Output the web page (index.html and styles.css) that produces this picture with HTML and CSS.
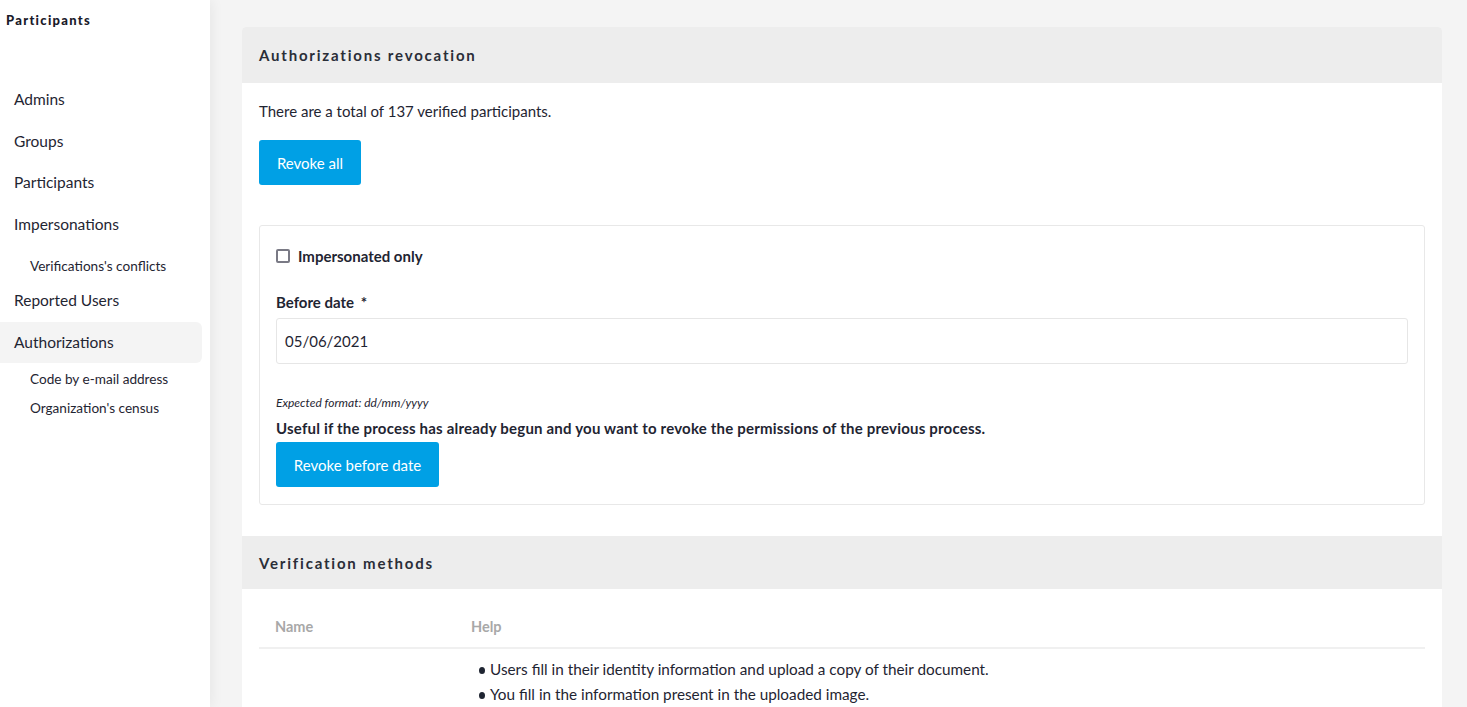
FILE: index.html
```html
<!DOCTYPE html>
<html>
<head>
<meta charset="utf-8">
<link rel="stylesheet" href="styles.css">
</head>
<body>
<div class="layout">
  <aside class="sidebar">
    <div class="side-title">Participants</div>
    <nav class="side-nav">
      <a class="nav-item">Admins</a>
      <a class="nav-item">Groups</a>
      <a class="nav-item">Participants</a>
      <a class="nav-item">Impersonations</a>
      <a class="nav-sub nav-sub-single">Verifications's conflicts</a>
      <a class="nav-item">Reported Users</a>
      <a class="nav-item active">Authorizations</a>
      <a class="nav-sub nav-sub-first">Code by e-mail address</a>
      <a class="nav-sub">Organization's census</a>
    </nav>
  </aside>
  <main class="main">
    <section class="card">
      <div class="card-header">Authorizations revocation</div>
      <div class="card-body">
        <p class="lead">There are a total of 137 verified participants.</p>
        <button class="btn">Revoke all</button>
        <div class="inner-box">
          <label class="check-row"><span class="checkbox"></span>Impersonated only</label>
          <div class="field-label">Before date <span class="req">*</span></div>
          <div class="input">05/06/2021</div>
          <div class="help">Expected format: dd/mm/yyyy</div>
          <div class="note">Useful if the process has already begun and you want to revoke the permissions of the previous process.</div>
          <button class="btn">Revoke before date</button>
        </div>
      </div>
      <div class="card-header second">Verification methods</div>
      <div class="card-body table-body">
        <div class="table-head">
          <div class="col-name">Name</div>
          <div class="col-help">Help</div>
        </div>
        <div class="table-row">
          <div class="col-name"></div>
          <ul class="col-help help-list">
            <li>Users fill in their identity information and upload a copy of their document.</li>
            <li>You fill in the information present in the uploaded image.</li>
          </ul>
        </div>
      </div>
    </section>
  </main>
</div>
</body>
</html>
```
FILE: styles.css
```css
* { box-sizing: border-box; }
html, body { margin: 0; padding: 0; height: 100%; overflow: hidden; }
body {
  font-family: "Lato", "Liberation Sans", sans-serif;
  color: #1f2532;
  background: #f4f4f4;
  font-size: 16px;
}
.layout { display: flex; height: 707px; }
.sidebar {
  width: 210px;
  flex: 0 0 210px;
  background: #fff;
  box-shadow: 2px 0 12px rgba(0,0,0,0.06);
  position: relative;
  z-index: 1;
  padding-right: 8px;
}
.side-title {
  font-size: 13px;
  font-weight: 900;
  letter-spacing: 1.3px;
  padding: 12px 0 0 6px;
  height: 79px;
  color: #1a1a2a;
}
.side-nav { display: flex; flex-direction: column; }
.nav-item {
  display: block;
  font-size: 15.5px;
  padding: 0 14px;
  height: 41.5px;
  line-height: 41px;
  color: #1f2532;
  border-radius: 0 6px 6px 0;
}
.nav-item.active { background: #f4f4f4; }
.nav-sub {
  display: block;
  font-size: 13.6px;
  padding-left: 30px;
  height: 29px;
  line-height: 29px;
  color: #1f2532;
}
.nav-sub-single { height: 35px; padding-top: 8px; line-height: 27px; }
.nav-sub-first { margin-top: 2px; }

.main { flex: 1; padding: 27px 25px 0 32px; }
.card { background: #fff; border-radius: 4px 4px 0 0; overflow: hidden; }
.card-header {
  background: #ededed;
  height: 56px;
  line-height: 56px;
  padding-left: 17px;
  font-size: 15px;
  font-weight: 700;
  letter-spacing: 1.8px;
  color: #2a2e38;
}
.card-header.second { height: 53px; line-height: 54px; }
.card-body { padding: 16px 17px 31px 17px; }
.lead { margin: 0; font-size: 15px; line-height: 24px; }
.btn {
  display: block;
  font-family: inherit;
  background: #00a0e5;
  color: #fff;
  border: 0;
  border-radius: 3px;
  font-size: 15px;
  height: 45px;
  padding: 0 17px;
  cursor: pointer;
}
.card-body > .btn { margin-top: 17px; width: 102px; }
.inner-box {
  margin-top: 40px;
  border: 1px solid #e8e8e8;
  border-radius: 3px;
  padding: 21px 16px 17px 16px;
}
.check-row {
  display: flex;
  align-items: center;
  font-weight: 700;
  font-size: 15px;
  height: 18px;
}
.checkbox {
  width: 14px;
  height: 14px;
  border: 2px solid #7a7a85;
  border-radius: 2px;
  margin-right: 8px;
  background: #fff;
}
.field-label { margin-top: 28px; font-weight: 700; font-size: 15px; line-height: 18px; }
.req { margin-left: 3px; }
.input {
  margin-top: 7px;
  height: 46px;
  border: 1px solid #e6e6e6;
  border-radius: 3px;
  padding-left: 8px;
  line-height: 44px;
  font-size: 15px;
}
.help { margin-top: 32px; font-size: 12px; font-style: italic; line-height: 14px; }
.note { margin-top: 9px; font-weight: 700; font-size: 15px; line-height: 18px; letter-spacing: 0.2px; }
.inner-box .btn { margin-top: 5px; width: 163px; padding: 0; }

.table-body { padding-top: 28px; }
.table-head {
  display: flex;
  height: 32px;
  border-bottom: 2px solid #f0f0f0;
  color: #a8a8a8;
  font-weight: 700;
  font-size: 14.5px;
  line-height: 20px;
}
.col-name { width: 212px; padding-left: 16px; flex: 0 0 212px; }
.col-help { flex: 1; }
.table-row { display: flex; padding-top: 8px; }
.help-list { margin: 0; padding: 0 0 0 19px; font-size: 15.3px; line-height: 25px; list-style: none; }
.help-list li { position: relative; }
.help-list li::before {
  content: "";
  position: absolute;
  left: -11px;
  top: 10px;
  width: 6px;
  height: 7px;
  border-radius: 50%;
  background: #1f2532;
}
```
